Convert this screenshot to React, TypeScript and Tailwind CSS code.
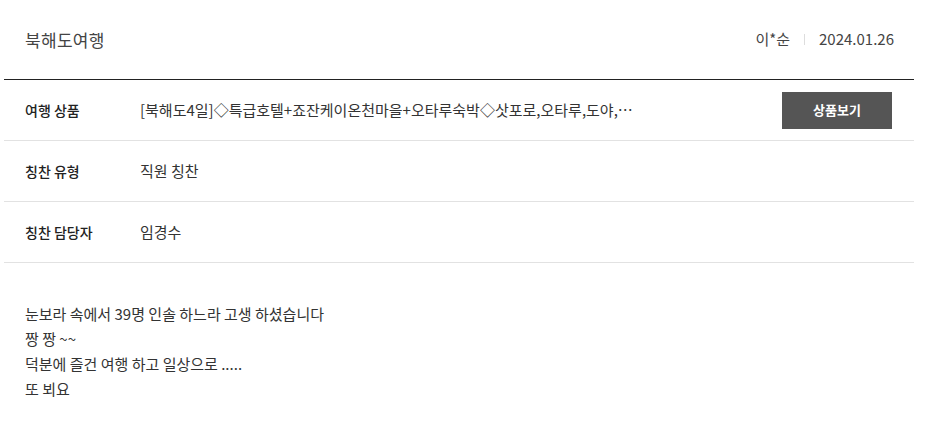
import React from "react";

const rows = [
    { label: "여행 상품", value: "[북해도4일]◇특급호텔+죠잔케이온천마을+오타루숙박◇삿포로,오타루,도야,…", button: true },
    { label: "칭찬 유형", value: "직원 칭찬" },
    { label: "칭찬 담당자", value: "임경수" },
];

const lines = [
    "눈보라 속에서 39명 인솔 하느라 고생 하셨습니다",
    "짱 짱 ~~",
    "덕분에 즐건 여행 하고 일상으로 .....",
    "또 뵈요",
];

export default function App() {
    return (
        <div
            className="w-[925px] h-[425px] bg-white overflow-hidden"
            style={{ fontFamily: '"Noto Sans CJK KR", "Noto Sans", sans-serif' }}
        >
            <div className="ml-[4px] w-[910px]">
                <div className="h-[80px] flex items-center justify-between pl-[21px] pr-[20px] border-b border-[#222]">
                    <h2 className="text-[17px] text-[#444] tracking-[0.3px]">북해도여행</h2>
                    <div className="flex items-center text-[15px] text-[#444]">
                        <span>이*순</span>
                        <span className="mx-[14px] h-[11px] w-px bg-[#ddd]"></span>
                        <span>2024.01.26</span>
                    </div>
                </div>
                {rows.map((row) => (
                    <div
                        key={row.label}
                        className="h-[61px] flex items-center pl-[21px] pr-[22px] border-b border-[#e2e2e2]"
                    >
                        <span className="w-[115px] text-[14px] text-[#222] font-medium shrink-0">{row.label}</span>
                        <span className="flex-1 text-[15px] text-[#333] truncate">{row.value}</span>
                        {row.button && (
                            <button className="w-[110px] h-[37px] bg-[#555] text-white text-[13px] font-bold ml-4">
                                상품보기
                            </button>
                        )}
                    </div>
                ))}
                <div className="pl-[21px] pt-[38px] text-[15px] leading-[25px] text-[#333]">
                    {lines.map((l) => (
                        <p key={l}>{l}</p>
                    ))}
                </div>
            </div>
        </div>
    );
}
